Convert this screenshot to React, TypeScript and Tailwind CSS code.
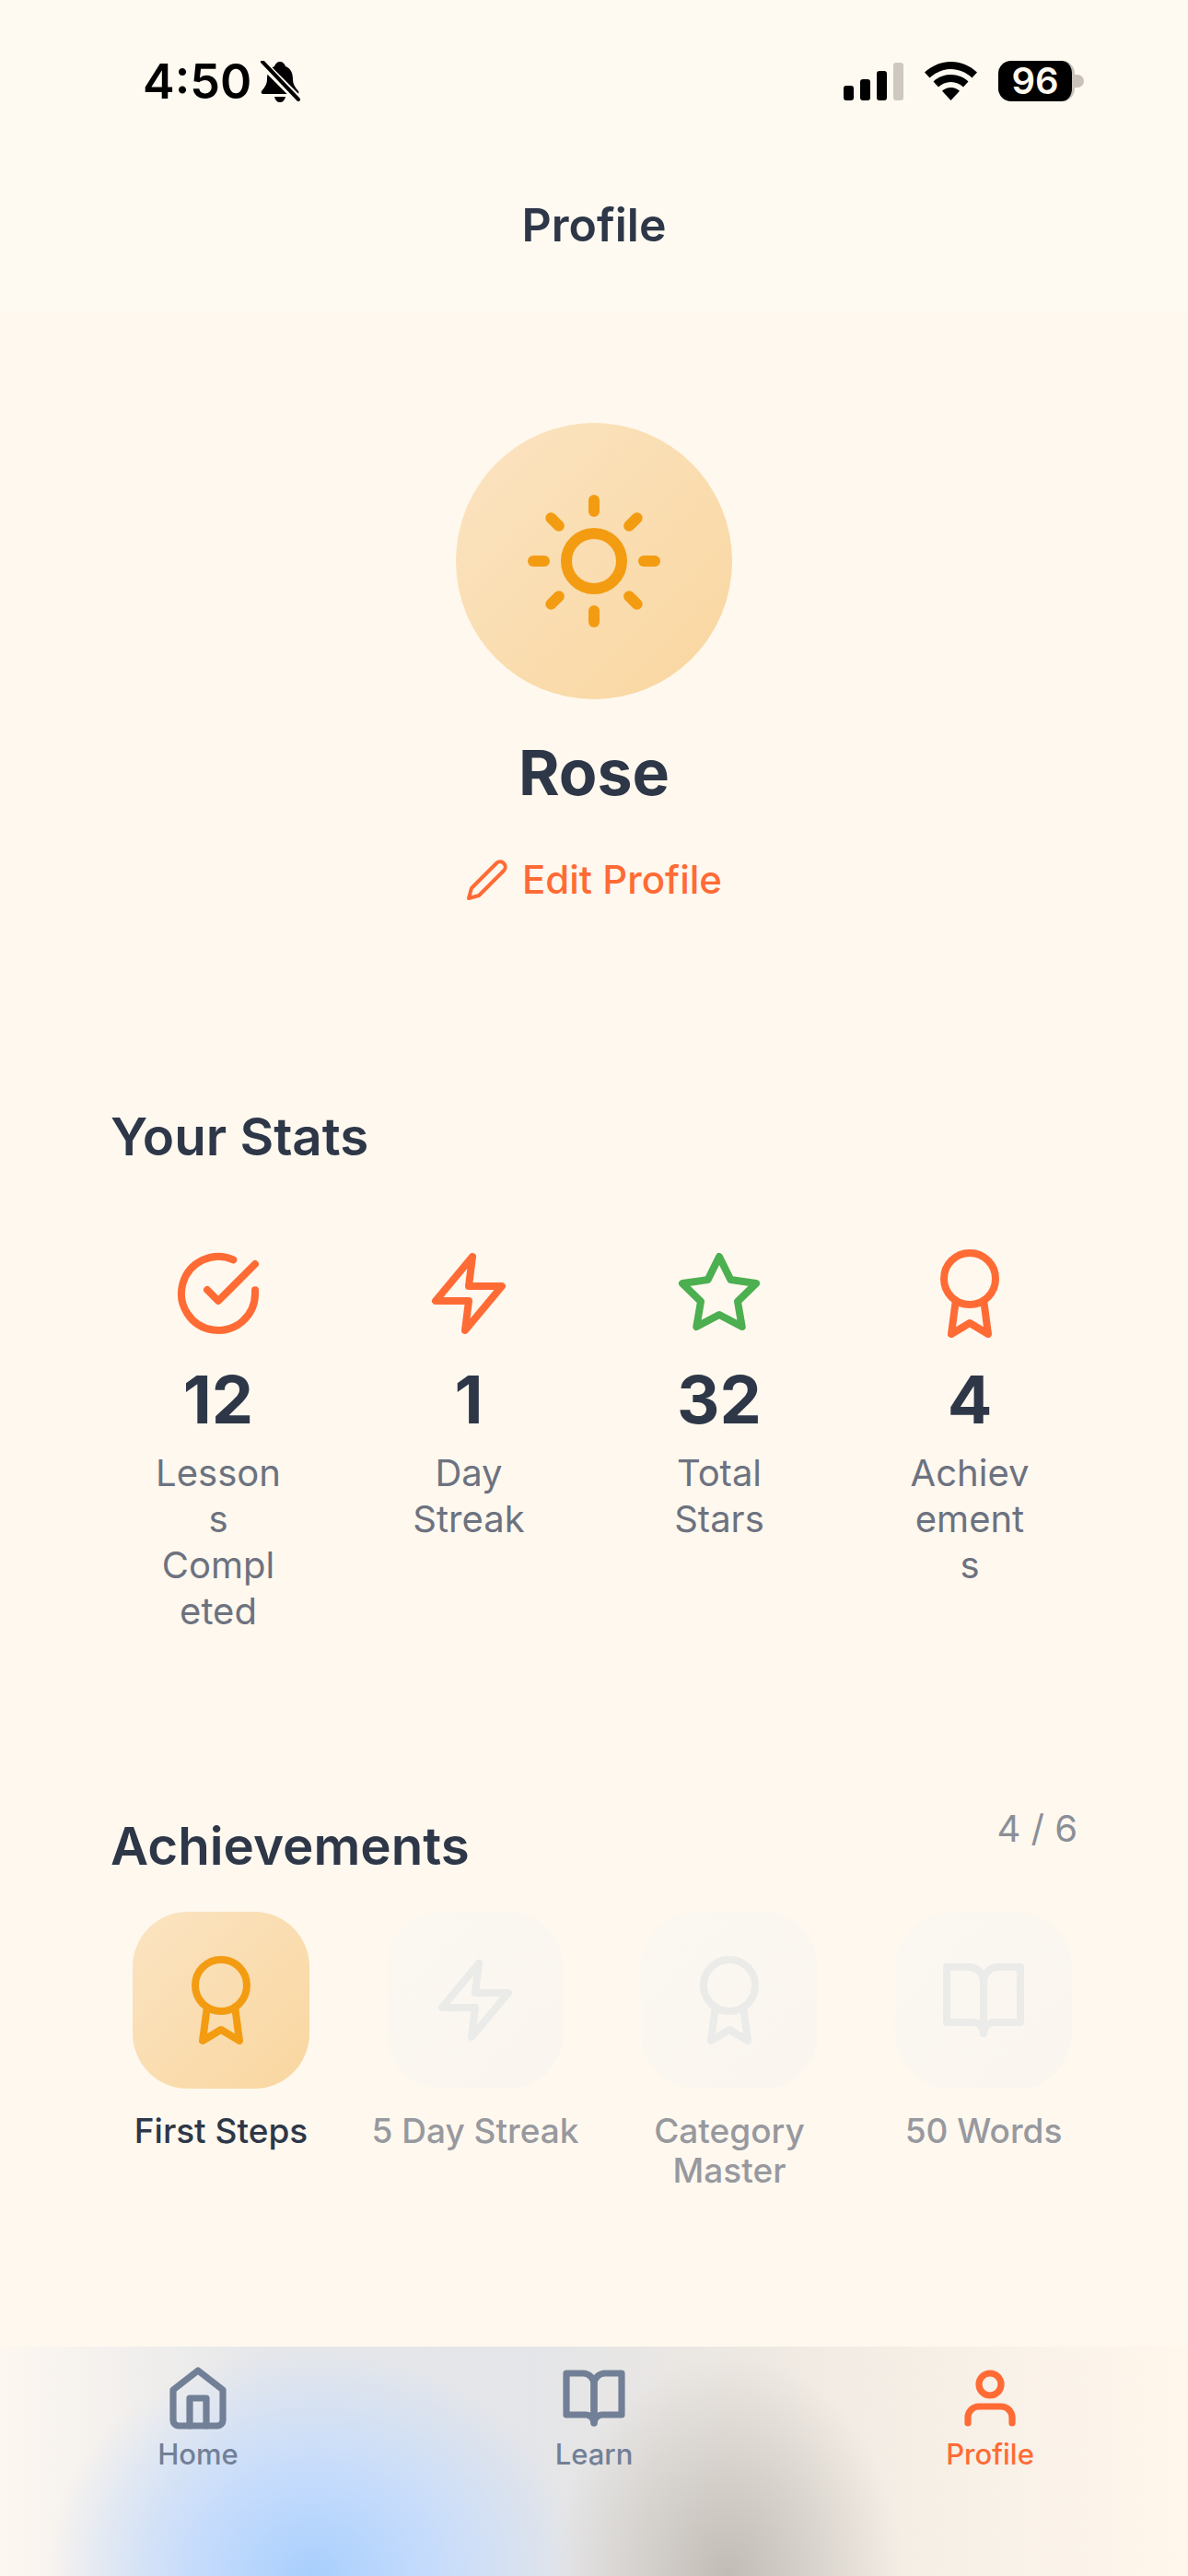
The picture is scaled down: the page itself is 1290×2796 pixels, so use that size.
import { FiAward, FiBookOpen, FiCheckCircle, FiEdit2, FiHome, FiStar, FiSun, FiUser, FiZap } from "react-icons/fi";
import type { IconType } from "react-icons";

const stats: { icon: IconType; color: string; value: string; label: string }[] = [
	{ icon: FiCheckCircle, color: "text-[#ff6b35]", value: "12", label: "Lessons Completed" },
	{ icon: FiZap, color: "text-[#ff6b35]", value: "1", label: "Day Streak" },
	{ icon: FiStar, color: "text-[#4caf50]", value: "32", label: "Total Stars" },
	{ icon: FiAward, color: "text-[#ff6b35]", value: "4", label: "Achievements" },
];

const achievements: { icon: IconType; label: string; unlocked?: boolean }[] = [
	{ icon: FiAward, label: "First Steps", unlocked: true },
	{ icon: FiZap, label: "5 Day Streak" },
	{ icon: FiAward, label: "Category Master" },
	{ icon: FiBookOpen, label: "50 Words" },
];

const tabs: { icon: IconType; label: string; active?: boolean }[] = [
	{ icon: FiHome, label: "Home" },
	{ icon: FiBookOpen, label: "Learn" },
	{ icon: FiUser, label: "Profile", active: true },
];

function StatusBar() {
	return (
		<div className="flex h-[132px] items-start justify-between pl-[155px] pr-[113px] pt-[64px] font-['Inter',sans-serif] text-black">
			<div className="flex items-center gap-[9px]">
				<span className="text-[52px] font-semibold leading-[50px]">4:50</span>
				<svg width="44" height="46" viewBox="0 0 44 46">
					<path d="M22 1c3 0 5 2 6 5 6 2 8 8 8 14 0 6 3 9 6 13 1 2 0 3-2 3H4c-2 0-3-1-2-3 3-4 6-7 6-13 0-6 2-12 8-14 1-3 3-5 6-5z" fill="#000" />
					<path d="M16 39h12c-1 4-3 6-6 6s-5-2-6-6z" fill="#000" />
					<path d="M2 2l40 40" stroke="#fff9f0" strokeWidth="9" />
					<path d="M3 1l39 41" stroke="#000" strokeWidth="4" strokeLinecap="round" />
				</svg>
			</div>
			<div className="flex items-start gap-[23px] pt-[2px]">
				<div className="mt-[2px] flex h-[41px] items-end gap-[7px]">
					<div className="h-[16px] w-[11px] rounded-[3px] bg-black" />
					<div className="h-[23px] w-[11px] rounded-[3px] bg-black" />
					<div className="h-[32px] w-[11px] rounded-[3px] bg-black" />
					<div className="h-[41px] w-[11px] rounded-[3px] bg-[#cfc8c1]" />
				</div>
				<svg width="57" height="42" viewBox="0 0 57 42" className="mt-[1px]">
					<path d="M28.5 0C17.5 0 8 4.2 0 11.5l5.5 6C12 11.5 20 8 28.5 8s16.500 3.500 23 9.500l5.500-6C49 4.200 39.500 0 28.500 0z" fill="#000" />
					<path d="M28.500 14c-7.500 0-14 2.800-19 7.500l5.500 6c3.500-3.300 8.200-5.500 13.500-5.500s10 2.200 13.500 5.500l5.500-6c-5-4.700-11.500-7.500-19-7.500z" fill="#000" />
					<path d="M28.500 28c-3.700 0-7 1.400-9.500 3.800L28.500 42 38 31.800c-2.500-2.400-5.800-3.800-9.500-3.800z" fill="#000" />
				</svg>
				<div className="flex items-center">
					<div className="flex h-[44px] w-[83px] items-center justify-center rounded-[14px] border-r-[3px] border-[#c9c2bb] bg-black text-[40px] font-semibold leading-none text-[#fff9f0]">
						96
					</div>
					<div className="h-[14px] w-[10px] rounded-r-[7px] bg-[#c9c2bb]" />
				</div>
			</div>
		</div>
	);
}

export default function App() {
	return (
		<div className="flex h-[2796px] w-[1290px] flex-col overflow-hidden bg-[#fff8ee] font-['Inter',sans-serif]">
			<div className="bg-[#fffaf1]">
				<StatusBar />
				{/* Header */}
				<div className="flex h-[208px] items-start justify-center pt-[80px]">
					<h1 className="text-[50px] font-semibold leading-[64px] text-[#2d3748]">Profile</h1>
				</div>
			</div>

			<main className="flex flex-1 flex-col">
				{/* Avatar */}
				<section className="flex flex-col items-center pt-[119px]">
					<div className="flex h-[300px] w-[300px] items-center justify-center rounded-full bg-gradient-to-br from-[#fbe4c2] to-[#f9d69f] text-[#f39c12]">
						<FiSun size={144} />
					</div>
					<h2 className="mt-[37px] text-[68px] font-bold leading-[84px] text-[#2d3748]">Rose</h2>
					<div className="mt-[49px] flex items-center gap-[14px] pr-[1px] text-[#ff6b35]">
						<FiEdit2 size={48} />
						<span className="text-[42px] font-medium leading-[52px]">Edit Profile</span>
					</div>
				</section>

				{/* Stats */}
				<section className="mt-[217px] px-[120px]">
					<h3 className="text-[56.5px] font-semibold leading-[72px] text-[#2d3748]">Your Stats</h3>
					<div className="-mx-[19px] mt-[86px] flex justify-center">
						{stats.map((stat) => (
							<div key={stat.label} className="flex w-[272px] flex-col items-center">
								<stat.icon size={96} className={stat.color} />
								<div className="mt-[25px] text-[72px] font-bold leading-[84px] text-[#2d3748]">{stat.value}</div>
								<div className="mt-[13px] w-[137.5px] break-words text-center text-[40px] leading-[50px] text-[#6c7280]">
									{stat.label}
								</div>
							</div>
						))}
					</div>
				</section>

				{/* Achievements */}
				<section className="mt-[194px] px-[120px]">
					<div className="flex items-start justify-between">
						<h3 className="text-[56.5px] font-semibold leading-[72px] text-[#2d3748]">Achievements</h3>
						<span className="-mt-[8px] text-[40px] leading-[50px] text-[#8a8f98]">4 / 6</span>
					</div>
					<div className="mt-[35px] flex gap-[36px]">
						{achievements.map((item) => (
							<div key={item.label} className="flex w-[240px] shrink-0 flex-col items-center">
								<div
									className={
										item.unlocked
											? "flex h-[192px] w-[192px] items-center justify-center rounded-[60px] bg-gradient-to-br from-[#fbe4c2] to-[#f9d69f] text-[#f39c12]"
											: "flex h-[192px] w-[192px] items-center justify-center rounded-[60px] bg-gradient-to-br from-[#fbf7f1] to-[#faf6ef] text-[#ebebe9]"
									}
								>
									<item.icon size={96} />
								</div>
								<div
									className={
										item.unlocked
											? "mt-[24px] text-center text-[37px] font-medium leading-[43px] text-[#2d3748]"
											: "mt-[24px] text-center text-[37px] font-medium leading-[43px] text-[#97999f]"
									}
								>
									{item.label}
								</div>
							</div>
						))}
					</div>
				</section>
			</main>

			{/* Tab bar */}
			<nav className="flex h-[249px] items-start bg-[radial-gradient(ellipse_290px_250px_at_340px_100%,#a8cffd_0%,#c6dcfc_45%,transparent_100%),radial-gradient(ellipse_190px_240px_at_790px_100%,#c1bcb6_0%,transparent_100%),linear-gradient(to_right,#fdf7f0,#e6e7ea_22%,#e4e5e8_45%,#ede8e2_62%,#f6efe6_78%,#fff7ec)] pt-[20px]">
				{tabs.map((tab) => (
					<div
						key={tab.label}
						className={
							tab.active
								? "flex flex-1 flex-col items-center text-[#ff6b35]"
								: "flex flex-1 flex-col items-center text-[#718096]"
						}
					>
						<tab.icon size={72} strokeWidth={2.4} />
						<span className="mt-[7px] text-[31px] font-medium leading-[36px]">{tab.label}</span>
					</div>
				))}
			</nav>
		</div>
	);
}
